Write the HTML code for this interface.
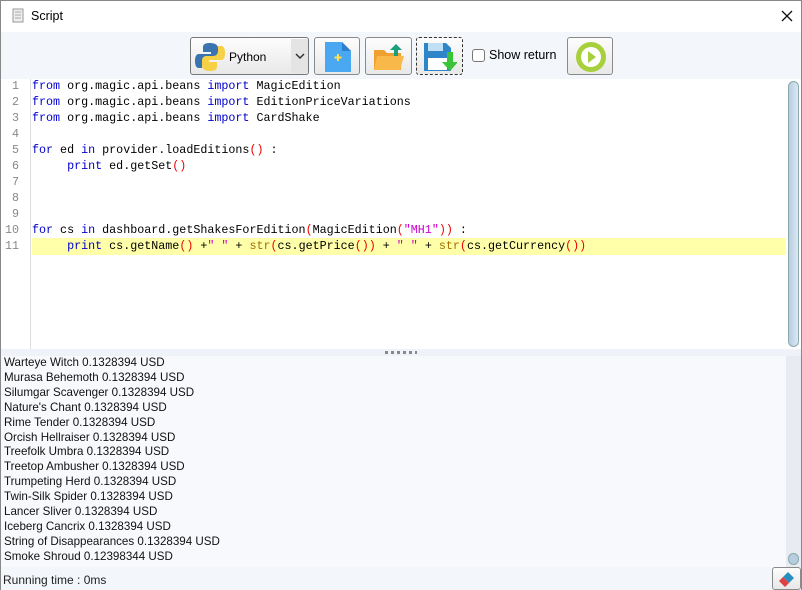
<!DOCTYPE html>
<html><head><style>
*{margin:0;padding:0;box-sizing:border-box}
body{width:802px;height:590px;overflow:hidden;background:#fff;font-family:"Liberation Sans",sans-serif;position:relative;border:1px solid #888}
.abs{position:absolute}
.title{left:0;top:0;width:800px;height:31px;background:#fff}
.tb{left:0;top:31px;width:800px;height:47px;background:#f3f6fb}
.btn{position:absolute;top:36px;height:38px;border:1px solid #8a8a8a;border-radius:3px;background:linear-gradient(#fdfdfd,#e8e8e8)}
.code{left:0;top:78px;width:785px;height:270px;background:#fff;font-family:"Liberation Mono",monospace;font-size:11.7px}
.gut{left:0;top:0;width:30px;height:270px;border-right:1px solid #ddd;color:#888;text-align:right}
.ln{position:absolute;left:0;height:16px;line-height:16px;white-space:pre}
.k{color:#00c}.r{color:#e00}.s{color:#c0c}.o{color:#a07000}
.out{left:0;top:355px;width:785px;height:211px;background:#f8f9fc;font-size:11.6px;line-height:14.9px;padding:0 3px;color:#111}
</style></head><body>
<div class="abs title">
 <svg class="abs" style="left:10px;top:7px" width="14" height="16"><rect x="2" y="1" width="10" height="13" fill="#eee" stroke="#999"/><path d="M4 4h6M4 7h6M4 10h6" stroke="#aaa"/></svg>
 <div class="abs" style="left:30px;top:8px;font-size:12.5px">Script</div>
 <svg class="abs" style="left:780px;top:9px" width="12" height="12"><path d="M1 1l10 10M11 1L1 11" stroke="#111" stroke-width="1.3"/></svg>
</div>
<div class="abs tb"></div>
<div class="btn" style="left:189px;width:119px;border-color:#777">
 <svg class="abs" style="left:3px;top:3px" width="32" height="32"><path d="M16 2c-7 0-7 3-7 5v4h8v2H5c-3 0-4 3-4 7s1 7 4 7h3v-5c0-3 2-5 5-5h7c2 0 4-2 4-4V7c0-3-3-5-8-5z" fill="#3a74b0"/><path d="M16 30c7 0 7-3 7-5v-4h-8v-2h12c3 0 4-3 4-7s-1-7-4-7h-3v5c0 3-2 5-5 5h-7c-2 0-4 2-4 4v6c0 3 3 5 8 5z" fill="#f7d045"/></svg>
 <div class="abs" style="left:38px;top:12px;font-size:12px">Python</div>
 <div class="abs" style="left:100px;top:1px;width:17px;height:34px;background:#e4e4e4"><svg class="abs" style="left:4px;top:13px" width="10" height="8"><path d="M1 2l4 4 4-4" stroke="#333" stroke-width="1.5" fill="none"/></svg></div>
</div>
<div class="btn" style="left:313px;width:46px"><svg class="abs" style="left:10px;top:4px" width="26" height="30"><path d="M0 0h17l9 9v21H0z" fill="#4aa8f2"/><path d="M17 0l9 9h-9z" fill="#2d7fd0"/><path d="M13 12v7M9.5 15.5h7" stroke="#ffe14d" stroke-width="2"/></svg></div>
<div class="btn" style="left:364px;width:47px"><svg class="abs" style="left:7px;top:4px" width="32" height="30"><path d="M1 8h10l3 3h14v17H1z" fill="#f0a030"/><path d="M4 14h27l-4 14H1z" fill="#f8b84a"/><path d="M23 2l6 6h-4v6h-4V8h-4z" fill="#19a07a"/></svg></div>
<div class="btn" style="left:415px;width:47px;border:1px dashed #333"><svg class="abs" style="left:6px;top:4px" width="34" height="30"><path d="M1 1h22l5 5v23H1z" fill="#2e86c8"/><rect x="5" y="1" width="15" height="8" fill="#bfe0f5"/><rect x="5" y="16" width="19" height="12" fill="#fff"/><path d="M24 10v10h-5l8 9 8-9h-5V10z" fill="#3ac43a"/></svg></div>
<div class="abs" style="left:471px;top:48px;width:13px;height:13px;border:1px solid #777;border-radius:3px;background:#fff"></div>
<div class="abs" style="left:488px;top:47px;font-size:12.5px">Show return</div>
<div class="btn" style="left:566px;width:46px"><svg class="abs" style="left:7px;top:3px" width="32" height="32"><circle cx="16" cy="16" r="15" fill="#a8cf3c"/><circle cx="16" cy="16" r="10" fill="#fff"/><path d="M13 10l8 6-8 6z" fill="#a8cf3c"/></svg></div>

<div class="abs code">
 <div class="abs gut">
  <div class="ln" style="top:-1px;width:18px">1</div><div class="ln" style="top:15px;width:18px">2</div><div class="ln" style="top:31px;width:18px">3</div><div class="ln" style="top:47px;width:18px">4</div><div class="ln" style="top:63px;width:18px">5</div><div class="ln" style="top:79px;width:18px">6</div><div class="ln" style="top:95px;width:18px">7</div><div class="ln" style="top:111px;width:18px">8</div><div class="ln" style="top:127px;width:18px">9</div><div class="ln" style="top:143px;width:18px">10</div><div class="ln" style="top:159px;width:18px">11</div>
 </div>
 <div class="abs" style="left:31px;top:159px;width:754px;height:17px;background:#ffffaa"></div>
 <div class="ln" style="left:31px;top:-1px"><span class="k">from</span> org.magic.api.beans <span class="k">import</span> MagicEdition</div>
 <div class="ln" style="left:31px;top:15px"><span class="k">from</span> org.magic.api.beans <span class="k">import</span> EditionPriceVariations</div>
 <div class="ln" style="left:31px;top:31px"><span class="k">from</span> org.magic.api.beans <span class="k">import</span> CardShake</div>
 <div class="ln" style="left:31px;top:63px"><span class="k">for</span> ed <span class="k">in</span> provider.loadEditions<span class="r">()</span> :</div>
 <div class="ln" style="left:31px;top:79px">     <span class="k">print</span> ed.getSet<span class="r">()</span></div>
 <div class="ln" style="left:31px;top:143px"><span class="k">for</span> cs <span class="k">in</span> dashboard.getShakesForEdition<span class="r">(</span>MagicEdition<span class="r">(</span><span class="s">"MH1"</span><span class="r">))</span> :</div>
 <div class="ln" style="left:31px;top:159px">     <span class="k">print</span> cs.getName<span class="r">()</span> +<span class="s">" "</span> + <span class="o">str</span><span class="r">(</span>cs.getPrice<span class="r">())</span> + <span class="s">" "</span> + <span class="o">str</span><span class="r">(</span>cs.getCurrency<span class="r">())</span></div>
</div>
<div class="abs" style="left:785px;top:78px;width:15px;height:270px;background:#fff"><div class="abs" style="left:2px;top:2px;width:11px;height:266px;border:1px solid #8aa;border-radius:6px;background:linear-gradient(90deg,#b8cde0,#dde9f4)"></div></div>
<div class="abs" style="left:0;top:348px;width:800px;height:7px;background:#eff3f9"><div class="abs" style="left:384px;top:2px;width:32px;height:3px;background:repeating-linear-gradient(90deg,#888 0 3px,transparent 3px 6px)"></div></div>
<div class="abs out">
Warteye Witch 0.1328394 USD<br>Murasa Behemoth 0.1328394 USD<br>Silumgar Scavenger 0.1328394 USD<br>Nature's Chant 0.1328394 USD<br>Rime Tender 0.1328394 USD<br>Orcish Hellraiser 0.1328394 USD<br>Treefolk Umbra 0.1328394 USD<br>Treetop Ambusher 0.1328394 USD<br>Trumpeting Herd 0.1328394 USD<br>Twin-Silk Spider 0.1328394 USD<br>Lancer Sliver 0.1328394 USD<br>Iceberg Cancrix 0.1328394 USD<br>String of Disappearances 0.1328394 USD<br>Smoke Shroud 0.12398344 USD
</div>
<div class="abs" style="left:785px;top:355px;width:15px;height:211px;background:#e8ecf2"><div class="abs" style="left:2px;top:197px;width:11px;height:12px;border:1px solid #8aa;border-radius:6px;background:#b8cde0"></div></div>
<div class="abs" style="left:0;top:566px;width:800px;height:23px;background:#f3f6fb"></div>
<div class="abs" style="left:2px;top:572px;font-size:12px;color:#222">Running time : 0ms</div>
<div class="btn" style="left:771px;top:566px;width:29px;height:23px"><svg class="abs" style="left:5px;top:2px" width="18" height="18"><path d="M10 2l6 6-5 5-6-6z" fill="#2a8fc0"/><path d="M5 7l6 6-4 4-6-6z" fill="#e04040"/></svg></div>
</body></html>
